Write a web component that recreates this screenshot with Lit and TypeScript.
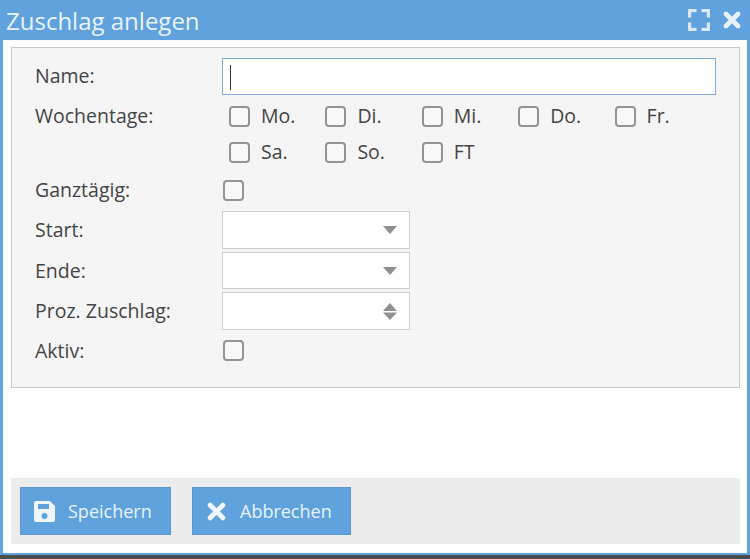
import { LitElement, html, css } from 'lit';
import { customElement } from 'lit/decorators.js';

const days = ['Mo.', 'Di.', 'Mi.', 'Do.', 'Fr.', 'Sa.', 'So.', 'FT'];

@customElement('app-root')
export class AppRoot extends LitElement {
  static styles = css`
    :host {
      display: block;
      height: 559px;
      overflow: hidden;
      font-family: 'Open Sans', sans-serif;
      font-size: 19.5px;
      color: #444;
      background: #4d4d4d;
    }
    .window {
      box-sizing: border-box;
      height: 555px;
      background: #5fa2dd;
      padding: 0 3px 3px;
      display: flex;
      flex-direction: column;
    }
    .titlebar {
      height: 40px;
      flex: none;
      display: flex;
      align-items: center;
      padding: 0 6px 0 3px;
      color: #e9f2fb;
    }
    .title {
      flex: 1;
      font-size: 24px;
      line-height: 40px;
      padding-top: 2px;
      box-sizing: border-box;
    }
    .tool {
      display: block;
      margin-left: 13px;
    }
    .body {
      flex: 1;
      background: #fff;
      padding: 7px 7px 9px 8px;
      display: flex;
      flex-direction: column;
    }
    .panel {
      box-sizing: border-box;
      height: 341px;
      border: 1px solid #c8c8c8;
      background: #f5f5f5;
      padding: 9px 23px 0;
      display: grid;
      grid-template-columns: 187px 1fr;
      grid-template-rows: 38px 76px 38px 41px 41px 40px 38px;
    }
    .label {
      display: flex;
      align-items: center;
      line-height: 24px;
    }
    .label.tall {
      height: 38px;
      margin-top: 2px;
    }
    .label.low {
      padding-top: 2px;
    }
    .field {
      display: flex;
      align-items: center;
    }
    .input {
      box-sizing: border-box;
      width: 494px;
      height: 37px;
      background: #fff;
      border: 1px solid #7eb0de;
      padding: 6px 7px;
    }
    .caret {
      width: 1px;
      height: 25px;
      background: #333;
    }
    .days {
      display: grid;
      grid-template-columns: repeat(5, 96.4px);
      grid-auto-rows: 36px;
      padding: 3px 0 0 7px;
    }
    .day {
      display: flex;
      align-items: center;
      gap: 11px;
      line-height: 24px;
    }
    .check {
      box-sizing: border-box;
      width: 21px;
      height: 21px;
      flex: none;
      border: 2px solid #949494;
      border-radius: 4px;
      background: #f8f8f8;
    }
    .field .check {
      margin-left: 1px;
    }
    .select {
      box-sizing: border-box;
      width: 188px;
      height: 38px;
      background: #fff;
      border: 1px solid #cfcfcf;
      display: flex;
      align-items: center;
      justify-content: flex-end;
      padding-right: 12px;
    }
    .select.short {
      height: 37px;
    }
    .select svg {
      display: block;
      margin-top: 1px;
    }
    .footer {
      margin-top: 90px;
      height: 66px;
      box-sizing: border-box;
      background: #ececec;
      padding: 9px;
      display: flex;
      gap: 21px;
      font-size: 18px;
    }
    .btn {
      box-sizing: border-box;
      height: 48px;
      background: #5fa2dd;
      border: 1px solid #5a97cf;
      color: #e9f2fb;
      display: flex;
      align-items: center;
      padding-left: 12px;
    }
    .btn svg {
      display: block;
      flex: none;
    }
    .btn span {
      line-height: 24px;
    }
    .save { width: 151px; }
    .save span { margin-left: 12px; }
    .cancel { width: 159px; padding-left: 14px; }
    .cancel span { margin-left: 14px; }
  `;

  render() {
    return html`
      <div class="window">
        <div class="titlebar">
          <div class="title">Zuschlag anlegen</div>
          <svg class="tool" width="22" height="22" viewBox="0 0 22 22" fill="none" stroke="#dbe9f7" stroke-width="3.2">
            <path d="M1.6 8.5V1.6h6.9M13.5 1.6h6.9v6.9M20.4 13.5v6.9h-6.9M8.5 20.4H1.6v-6.9" />
          </svg>
          <svg class="tool" width="18" height="18" viewBox="0 0 18 18">
            <path d="M3 3l12 12M15 3L3 15" stroke="#e9f2fb" stroke-width="4.6" stroke-linecap="round" fill="none" />
          </svg>
        </div>
        <div class="body">
          <div class="panel">
            <div class="label">Name:</div>
            <div class="field"><div class="input"><div class="caret"></div></div></div>

            <div class="label tall">Wochentage:</div>
            <div class="days">
              ${days.map((d) => html`<div class="day"><div class="check"></div><span>${d}</span></div>`)}
            </div>

            <div class="label">Ganztägig:</div>
            <div class="field"><div class="check"></div></div>

            <div class="label">Start:</div>
            <div class="field"><div class="select">${this.arrow()}</div></div>

            <div class="label">Ende:</div>
            <div class="field"><div class="select short">${this.arrow()}</div></div>

            <div class="label">Proz. Zuschlag:</div>
            <div class="field"><div class="select">${this.spinner()}</div></div>

            <div class="label low">Aktiv:</div>
            <div class="field"><div class="check"></div></div>
          </div>

          <div class="footer">
            <div class="btn save">
              <svg width="23" height="23" viewBox="0 0 23 23">
                <path fill="#f0f5fb" fill-rule="evenodd" d="M3 1h14l5 5v14a2 2 0 0 1-2 2H3a2 2 0 0 1-2-2V3a2 2 0 0 1 2-2zM5 4v5h11V4zM11.5 13a3 3 0 1 0 0 6 3 3 0 0 0 0-6z" />
              </svg>
              <span>Speichern</span>
            </div>
            <div class="btn cancel">
              <svg width="19" height="19" viewBox="0 0 18 18">
                <path d="M3 3l12 12M15 3L3 15" stroke="#f0f5fb" stroke-width="4.6" stroke-linecap="round" fill="none" />
              </svg>
              <span>Abbrechen</span>
            </div>
          </div>
        </div>
      </div>
    `;
  }

  private arrow() {
    return html`<svg width="14" height="8" viewBox="0 0 14 8"><path d="M0 0h14L7 8z" fill="#909090" /></svg>`;
  }

  private spinner() {
    return html`<svg width="14" height="17" viewBox="0 0 14 17">
      <path d="M7 0l7 8H0zM0 9.5h14L7 17z" fill="#909090" />
    </svg>`;
  }
}
